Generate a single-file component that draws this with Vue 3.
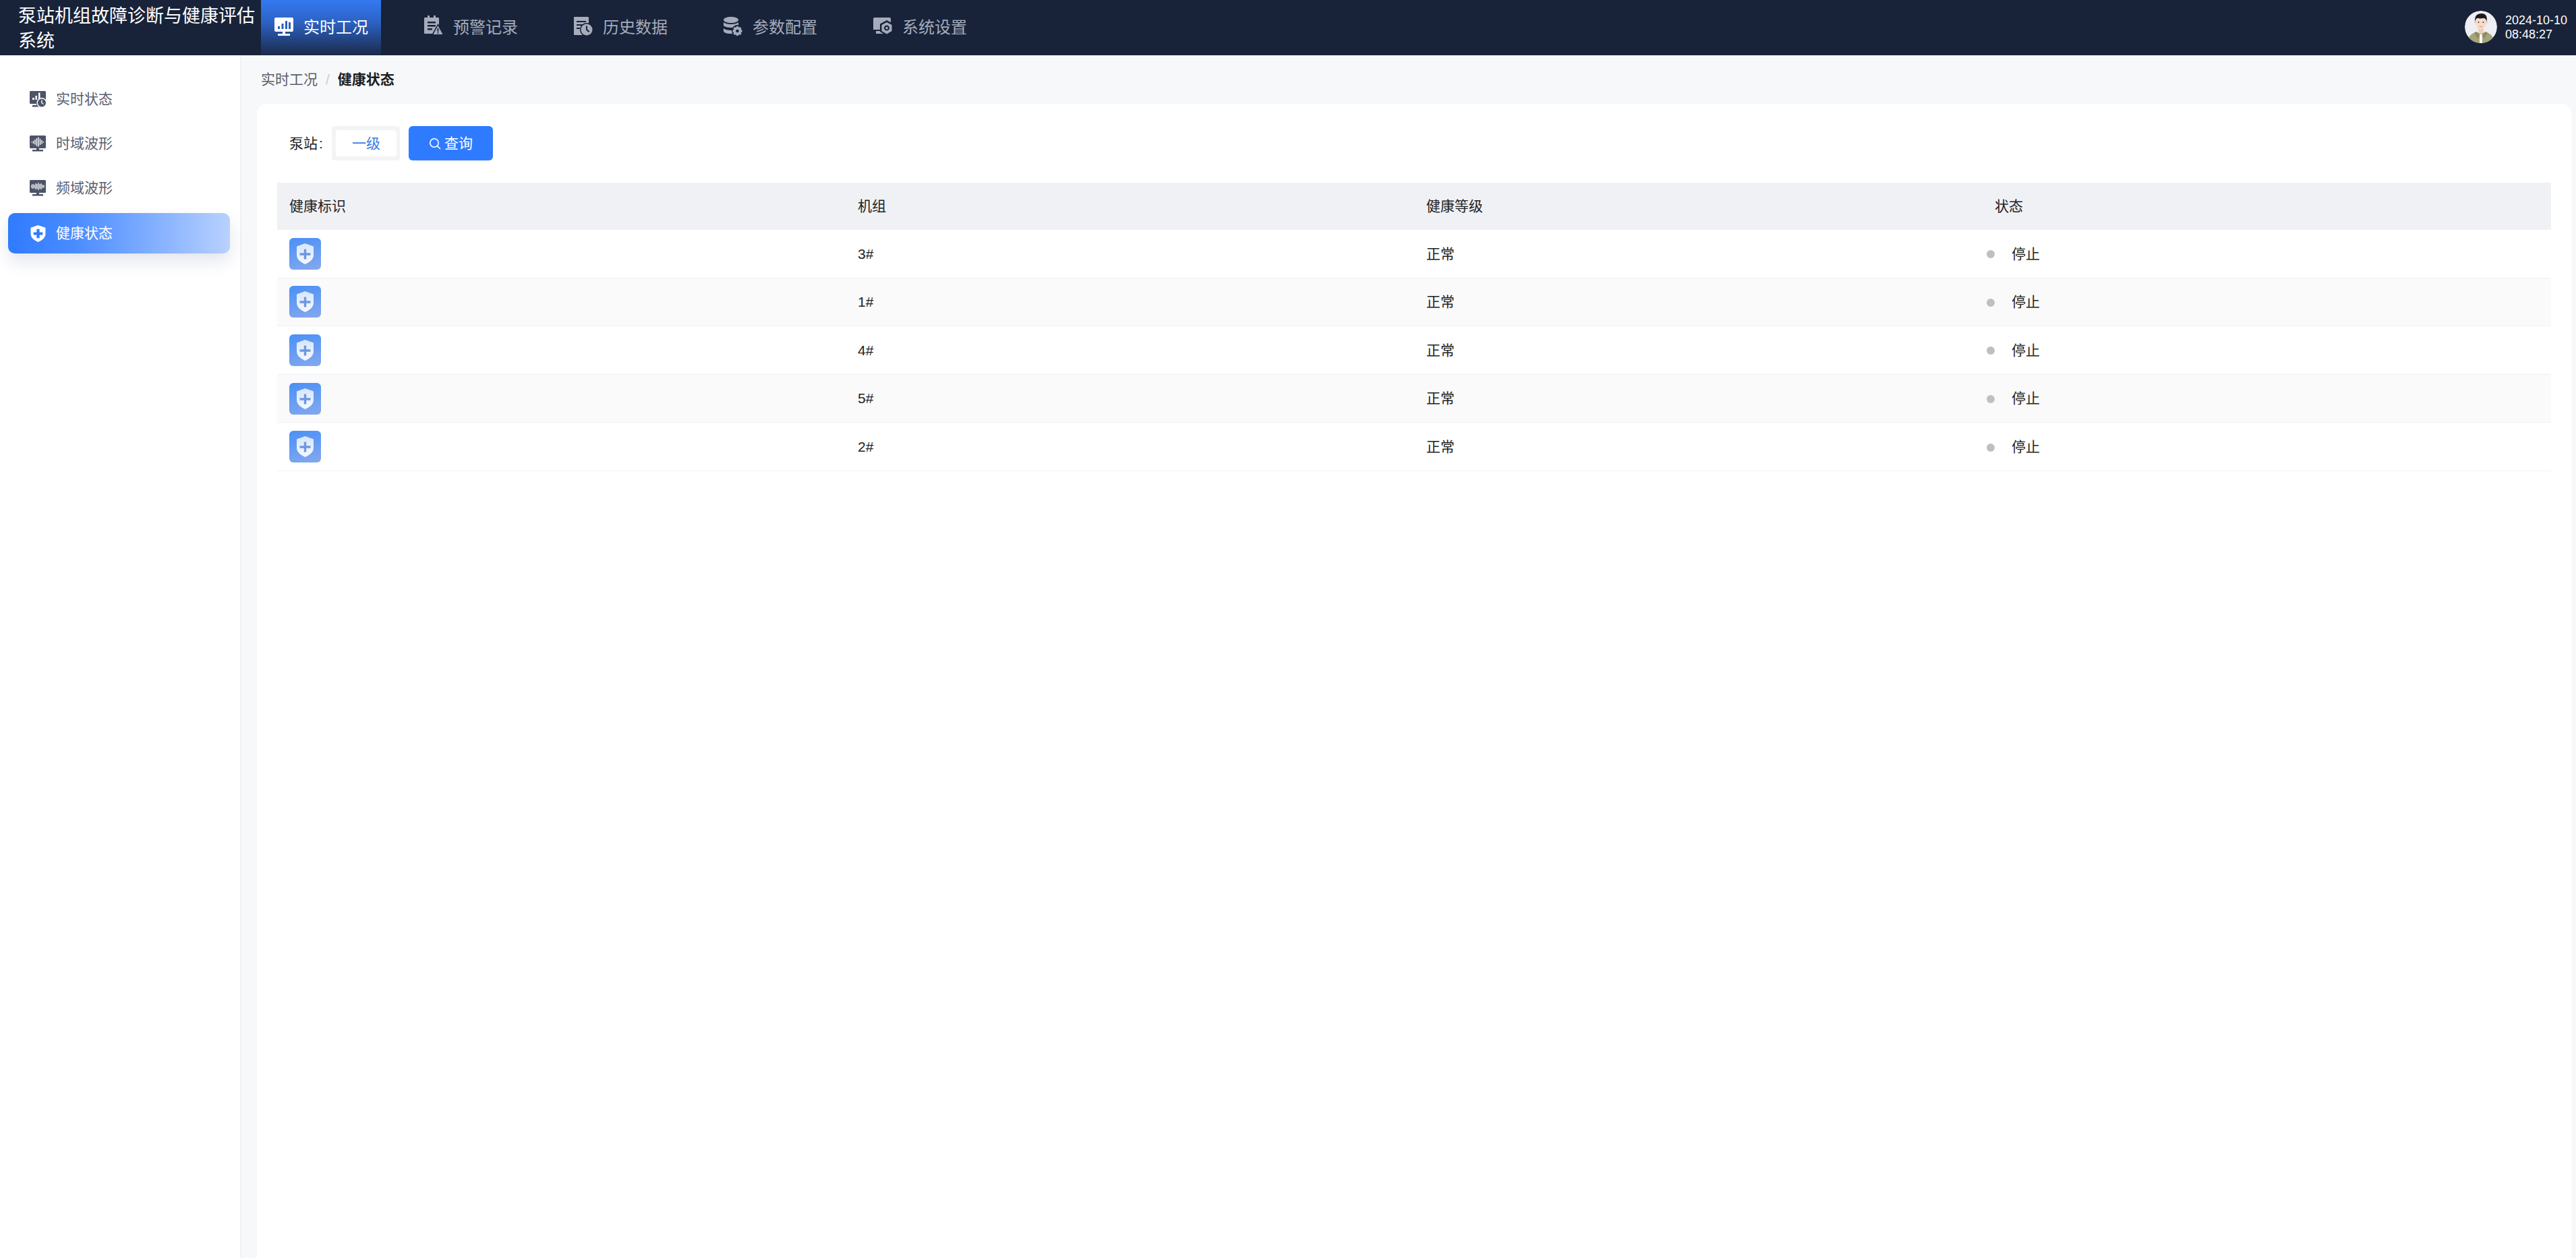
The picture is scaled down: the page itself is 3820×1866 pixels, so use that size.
<script setup>
const HEAD_BG = '#18233a'
const SIDE = '#4d5468'
const navItems = [
  { label: '实时工况', active: true, vb: '0 1 28 28', paths: [
    { d: 'M2 0H26A2 2 0 0 1 28 2V19A2 2 0 0 1 26 21H2A2 2 0 0 1 0 19V2A2 2 0 0 1 2 0Z', fill: '#fff' },
    { d: 'M5 13H8V17H5ZM10.5 9H13.5V17H10.5ZM16 5H19V17H16ZM21 7H24V17H21Z', fill: '#2a5fc4' },
    { d: 'M12 21H16V24H23V27H5V24H12Z', fill: '#fff' }
  ] },
  { label: '预警记录', vb: '0 4 28 28', paths: [
    { d: 'M5 0H8V3H14V0H17V3H21A1 1 0 0 1 22 4V27H1A1 1 0 0 1 0 26V4A1 1 0 0 1 1 3H5Z', fill: 'currentColor' },
    { d: 'M5 9H17V11.5H5ZM5 14H17V16.5H5ZM5 19H12V21.5H5Z', fill: HEAD_BG },
    { d: 'M20.5 12L30 29H11Z', fill: HEAD_BG },
    { d: 'M20.5 15L27.5 28H13.5Z', fill: 'currentColor' },
    { d: 'M19.6 19H21.4V24H19.6ZM19.6 25H21.4V26.8H19.6Z', fill: HEAD_BG }
  ] },
  { label: '历史数据', vb: '0 2 28 28', paths: [
    { d: 'M1 0H21A1 1 0 0 1 22 1V27H1A1 1 0 0 1 0 26V1A1 1 0 0 1 1 0Z', fill: 'currentColor' },
    { d: 'M4 6H18V8H4ZM4 11H14V13H4ZM4 16H9V18H4Z', fill: HEAD_BG },
    { d: 'M19 9A10 10 0 1 1 18.99 9Z', fill: HEAD_BG },
    { d: 'M19 10.5A8.5 8.5 0 1 1 18.99 10.5Z', fill: 'currentColor' },
    { d: 'M18 13.5H20V18.5L23.5 21.5L22 23L18 19.5Z', fill: HEAD_BG }
  ] },
  { label: '参数配置', vb: '0 2 28 28', paths: [
    { d: 'M11 0C17 0 22 1.8 22 4.5C22 7.2 17 9 11 9C5 9 0 7.2 0 4.5C0 1.8 5 0 11 0Z', fill: 'currentColor' },
    { d: 'M0 8C2 10 6 11 11 11C16 11 20 10 22 8V13C20 15 16 16 11 16C6 16 2 15 0 13Z', fill: 'currentColor' },
    { d: 'M0 17C2 19 6 20 11 20L14 20V25L11 25C5 25 0 23.5 0 21Z', fill: 'currentColor' },
    { d: 'M20.5 12A8.5 8.5 0 1 1 20.49 12Z', fill: HEAD_BG },
    { d: 'M19 14H22L22.6 16.1L24.6 15L26.6 17L25.5 19L27.5 19.5V22.5L25.5 23L26.6 25L24.6 27L22.6 25.9L22 28H19L18.4 25.9L16.4 27L14.4 25L15.5 23L13.5 22.5V19.5L15.5 19L14.4 17L16.4 15L18.4 16.1Z', fill: 'currentColor' },
    { d: 'M20.5 18.7A2.3 2.3 0 1 1 20.49 18.7Z', fill: HEAD_BG }
  ] },
  { label: '系统设置', vb: '0 3 28 28', paths: [
    { d: 'M2 2H24A2 2 0 0 1 26 4V20H0V4A2 2 0 0 1 2 2ZM4 22H18V26H4Z', fill: 'currentColor' },
    { d: 'M20 6L30 11.5V23L20 29L10 23V11.5Z', fill: HEAD_BG },
    { d: 'M20 9L27.5 13V22L20 26.5L12.5 22V13Z', fill: 'currentColor' },
    { d: 'M20 13.5A4 4 0 1 1 19.99 13.5ZM20 15.7A1.9 1.9 0 1 0 20.01 15.7Z', fill: HEAD_BG, 'fill-rule': 'evenodd' }
  ] }
]

const screen = 'M1.5 0H22.5A1.5 1.5 0 0 1 24 1.5V17.5A1.5 1.5 0 0 1 22.5 19H1.5A1.5 1.5 0 0 1 0 17.5V1.5A1.5 1.5 0 0 1 1.5 0ZM10 19H14V21H20V23.5H4V21H10Z'
const sideItems = [
  { label: '实时状态', paths: [
    { d: screen, fill: SIDE },
    { d: 'M4 10H7V13H4ZM8.5 7H11V13H8.5ZM13 2.5H15.5V13H13Z', fill: '#fff' },
    { d: 'M18 10A7.5 7.5 0 1 1 17.99 10Z', fill: '#fff' },
    { d: 'M18 11.5A6 6 0 1 1 17.99 11.5Z', fill: SIDE },
    { d: 'M17.2 13.5H18.6V17.2L21 19L20.2 20L17.2 17.8Z', fill: '#fff' }
  ] },
  { label: '时域波形', paths: [
    { d: screen, fill: SIDE },
    { d: 'M3 9.5V10.5M5.5 8V12M8 6V13.5M10.5 4V15.5M13 2.5V16.5M15.5 5V14M18 7V12.5M20.5 9V10.5', stroke: '#fff', 'stroke-width': 1.4, fill: 'none' }
  ] },
  { label: '频域波形', paths: [
    { d: screen, fill: SIDE },
    { d: 'M3 7V12M5 6V13M7 7V12M9 5V14M11 6V13M13 4V15M15 6V13M17 5V14M19 7V12M21 7.5V11.5', stroke: '#fff', 'stroke-width': 1.2, fill: 'none' }
  ] },
  { label: '健康状态', active: true, shield: true }
]

const rows = ['3#', '1#', '4#', '5#', '2#'].map((unit) => ({ unit, level: '正常', status: '停止' }))
const columns = ['健康标识', '机组', '健康等级', '状态']
</script>

<template>
  <div class="app">
    <header class="topbar">
      <div class="title">泵站机组故障诊断与健康评估系统</div>
      <nav class="nav">
        <div v-for="n in navItems" :key="n.label" class="nav-item" :class="{ active: n.active }">
          <svg class="nav-icon" :viewBox="n.vb" width="28" height="28">
            <path v-for="(p, i) in n.paths" :key="i" v-bind="p" />
          </svg>
          <span>{{ n.label }}</span>
        </div>
      </nav>
      <div class="user">
        <svg class="avatar" viewBox="0 0 48 48" width="48" height="48">
          <circle cx="24" cy="24" r="24" fill="#edeff4" />
          <path d="M5 48C5 38 8 35 17 31L24 34L31 31C40 35 43 38 43 48Z" fill="#a5a47a" />
          <path d="M17 31L22 36V48H26V36L31 31L34 33L29 41L26 38V48H22V38L19 41L14 33Z" fill="#8d8c62" />
          <rect x="22" y="35" width="4" height="13" fill="#f8f8f4" />
          <path d="M20 24H28V31L24 35L20 31Z" fill="#efcdb4" />
          <ellipse cx="24" cy="17" rx="8.2" ry="10.5" fill="#f6dccb" />
          <circle cx="15.5" cy="17" r="1.6" fill="#efcdb4" />
          <circle cx="32.5" cy="17" r="1.6" fill="#efcdb4" />
          <path d="M15.5 16C14 8 18 4 25 4C31 4 34 8 32.5 16C31.5 12 30 10.5 27 11C23 12 19 11 18 11C16.5 12 16 14 15.5 16Z" fill="#1c1c1e" />
          <circle cx="20.5" cy="17" r=".9" fill="#222" />
          <circle cx="27.5" cy="17" r=".9" fill="#222" />
          <path d="M21.5 23Q24 24.6 26.5 23" stroke="#c2806e" stroke-width=".8" fill="none" />
        </svg>
        <div class="clock">
          <div>2024-10-10</div>
          <div>08:48:27</div>
        </div>
      </div>
    </header>

    <div class="body">
      <aside class="sidebar">
        <div v-for="s in sideItems" :key="s.label" class="side-item" :class="{ active: s.active }">
          <svg v-if="s.shield" class="side-icon" viewBox="0 0 24 24" width="25" height="25">
            <path d="M12 0L22.5 3.5V12C22.5 18 18 21.5 12 24C6 21.5 1.5 18 1.5 12V3.5Z" fill="#fff" />
            <path d="M10 5.5H14V10H18.5V14H14V18.5H10V14H5.5V10H10Z" fill="#2f7bff" />
          </svg>
          <svg v-else class="side-icon" viewBox="0 0 25 25" width="25" height="25">
            <path v-for="(p, i) in s.paths" :key="i" v-bind="p" />
          </svg>
          <span>{{ s.label }}</span>
        </div>
      </aside>

      <main class="main">
        <div class="crumbs">
          <span class="crumb-link">实时工况</span>
          <span class="crumb-sep">/</span>
          <span class="crumb-current">健康状态</span>
        </div>

        <section class="card">
          <div class="filters">
            <span class="filter-label">泵站<span class="colon">:</span></span>
            <div class="select"><div class="select-inner">一级</div></div>
            <button class="search-btn" type="button">
              <svg viewBox="0 0 18 18" width="18" height="18">
                <circle cx="8" cy="8" r="6.2" fill="none" stroke="#fff" stroke-width="1.6" />
                <path d="M12.5 12.5L17 17" stroke="#fff" stroke-width="1.6" />
              </svg>
              <span>查询</span>
            </button>
          </div>

          <div class="table">
            <div class="tr thead">
              <div v-for="c in columns" :key="c" class="td">{{ c }}</div>
            </div>
            <div v-for="(r, i) in rows" :key="i" class="tr row">
              <div class="td">
                <div class="health-badge">
                  <svg class="health-shield" viewBox="0 0 25 31" width="25" height="31">
                    <defs>
                      <linearGradient id="shieldFill" x1="0" y1="0" x2="0" y2="1">
                        <stop offset="0" stop-color="#d6e6fc" />
                        <stop offset="1" stop-color="#f4f8ff" />
                      </linearGradient>
                    </defs>
                    <path d="M12.5 0L25 4.5V17C25 24 19 28 12.5 31C6 28 0 24 0 17V4.5Z" fill="url(#shieldFill)" />
                    <path d="M10.8 8.5H14.2V14.3H20.5V17.7H14.2V23.5H10.8V17.7H4.5V14.3H10.8Z" fill="#6e98de" />
                  </svg>
                </div>
              </div>
              <div class="td">{{ r.unit }}</div>
              <div class="td">{{ r.level }}</div>
              <div class="td status">
                <i class="dot"></i>
                <span>{{ r.status }}</span>
              </div>
            </div>
          </div>
        </section>
      </main>
    </div>
  </div>
</template>

<style scoped>
.app {
  height: 100vh;
  display: flex;
  flex-direction: column;
  overflow: hidden;
  font-family: "Liberation Sans", "Noto Sans CJK SC", sans-serif;
  font-size: 21px;
  line-height: 1.4;
  color: #222;
}
.topbar {
  height: 82px;
  flex: none;
  display: flex;
  align-items: stretch;
  background: #18233a;
}
.title {
  width: 351px;
  padding-left: 27px;
  margin-right: 9px;
  margin-top: 4px;
  align-self: center;
  font-size: 27px;
  line-height: 37px;
  color: #fff;
}
.nav {
  display: flex;
  gap: 44px;
}
.nav-item {
  width: 178px;
  padding-left: 20px;
  box-sizing: border-box;
  display: flex;
  align-items: center;
  gap: 15px;
  font-size: 24px;
  color: #a6acbb;
  white-space: nowrap;
}
.nav-item.active {
  color: #fff;
  background: linear-gradient(180deg, #3479f0 0%, #2c62c4 40%, #1b2a4a 100%);
}
.nav-icon {
  flex: none;
  overflow: visible;
}
.user {
  margin-left: auto;
  padding-right: 13px;
  display: flex;
  align-items: center;
  gap: 12px;
}
.avatar {
  display: block;
  border-radius: 50%;
  margin-top: -2px;
}
.clock {
  font-size: 18px;
  line-height: 21px;
  color: #fff;
}
.body {
  flex: 1;
  min-height: 0;
  display: flex;
}
.sidebar {
  width: 358px;
  flex: none;
  box-sizing: border-box;
  padding: 35px 15px 0 12px;
  display: flex;
  flex-direction: column;
  gap: 6px;
  background: #fff;
  border-right: 2px solid #eff1f5;
}
.side-item {
  height: 60px;
  padding-left: 32px;
  display: flex;
  align-items: center;
  gap: 14px;
  border-radius: 10px;
  color: #5a6072;
}
.side-item.active {
  margin-top: 1px;
  color: #fff;
  background: linear-gradient(90deg, #2f7bff 0%, #4a8cff 30%, #b9d1ff 100%);
  box-shadow: 0 12px 24px rgba(60, 80, 130, 0.14);
}
.side-icon {
  flex: none;
  overflow: visible;
}
.main {
  flex: 1;
  min-width: 0;
  display: flex;
  flex-direction: column;
  padding: 0 7px 0 23px;
  background: #f6f8fa;
}
.crumbs {
  height: 72px;
  flex: none;
  padding-left: 6px;
  display: flex;
  align-items: center;
  gap: 12px;
}
.crumb-link {
  color: #5a5f6b;
}
.crumb-sep {
  color: #c8ccd2;
}
.crumb-current {
  font-weight: 700;
  color: #1c1c1c;
}
.card {
  flex: 1;
  padding: 33px 30px 0;
  background: #fff;
  border-radius: 14px 14px 0 0;
}
.filters {
  height: 51px;
  padding-left: 18px;
  display: flex;
  align-items: center;
}
.filter-label {
  width: 63px;
  flex: none;
}
.colon {
  margin-left: 2px;
}
.select {
  width: 101px;
  height: 51px;
  box-sizing: border-box;
  padding: 6px 5px 6px 6px;
  background: #f3f4f6;
  border-radius: 4px;
}
.select-inner {
  height: 39px;
  display: flex;
  align-items: center;
  justify-content: center;
  background: #fff;
  border-radius: 4px;
  color: #3b7ce4;
}
.search-btn {
  width: 125px;
  height: 51px;
  margin-left: 13px;
  padding: 0;
  display: flex;
  align-items: center;
  justify-content: center;
  gap: 5px;
  border: 0;
  border-radius: 6px;
  background: #2f7bff;
  color: #fff;
  font: inherit;
}
.table {
  margin-top: 33px;
}
.tr {
  display: grid;
  grid-template-columns: repeat(4, 1fr);
  align-items: center;
}
.thead {
  height: 70px;
  background: #eff1f5;
}
.row {
  height: 71.6px;
  box-sizing: border-box;
  border-bottom: 1px solid #eef0f3;
}
.row:nth-child(odd) {
  background: #fafafa;
}
.td {
  padding-left: 18px;
}
.health-badge {
  width: 47px;
  height: 47px;
  display: flex;
  align-items: center;
  justify-content: center;
  border-radius: 6px;
  background: linear-gradient(165deg, #4a90f6 0%, #6d9ff2 60%, #84a9ee 100%);
}
.health-shield {
  filter: blur(0.5px);
}
.status {
  padding-left: 6px;
  display: flex;
  align-items: center;
}
.dot {
  width: 12px;
  height: 12px;
  margin-top: 2px;
  margin-right: 25px;
  border-radius: 50%;
  background: #bfbfbf;
}
</style>

<style>
html,
body {
  margin: 0;
  overflow: hidden;
}
</style>
